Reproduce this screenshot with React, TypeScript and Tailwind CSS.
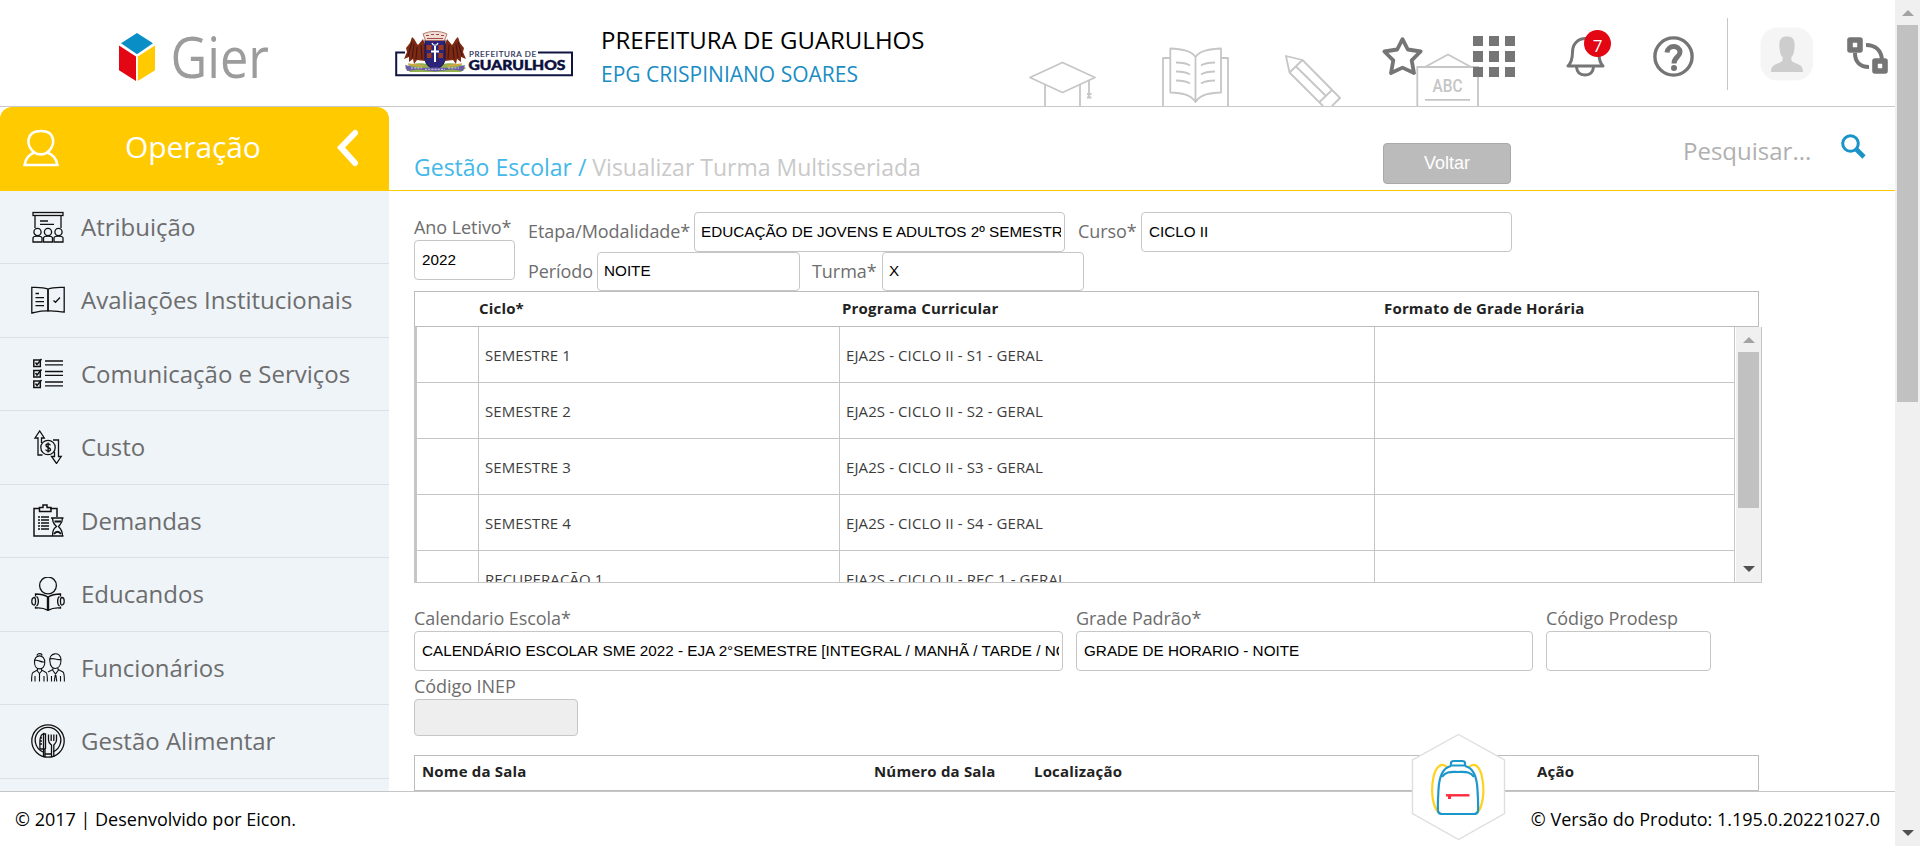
import React from "react";

const OS = "font-['Open_Sans','Noto_Sans',sans-serif]";
const ARIAL = "font-['Liberation_Sans',Arial,sans-serif]";

/* ---------- brand marks ---------- */

function GierLogo() {
  return (
    <svg className="block shrink-0 overflow-visible" width="152" height="54" viewBox="0 0 152 54">
      <path d="M18 1 L34 11.2 L18 22.3 L2 11.2 Z" fill="#0a8ec6" />
      <path d="M0 13.6 L17 24.4 V49 L0 38.2 Z" fill="#e30613" />
      <path d="M36 13.6 L18.8 24.4 V49 L36 38.2 Z" fill="#ffca00" />
      <text x="51.5" y="46" fontFamily="Open Sans" fontWeight="400" fontSize="57" fill="#9c9c9c" textLength="98.5" lengthAdjust="spacingAndGlyphs">
        Gier
      </text>
    </svg>
  );
}

function CityLogo() {
  return (
    <svg className="block shrink-0" width="180" height="48" viewBox="0 0 180 48">
      <path d="M10 21.5 H1.2 V44.3 H177 V21.5 H143" fill="none" stroke="#0f1440" strokeWidth="2" />
      <path d="M10 37 C20 29 30 34 40 33 C50 34 60 29 71 37 L66 41 L15 41 Z" fill="#93b04e" />
      <g fill="#7d2a14">
        <path d="M17 6 C20 8 21 12 23 14 L28 8 L31 16 L30 30 L22 29 L19 33 L18 28 L14 31 L14 26 L9 28 L12 21 L11 17 L15 12 Z" />
        <path d="M63 6 C60 8 59 12 57 14 L52 8 L49 16 L50 30 L58 29 L61 33 L62 28 L66 31 L66 26 L71 28 L68 21 L69 17 L65 12 Z" />
      </g>
      <g stroke="#471510" strokeWidth="1.1" fill="none">
        <path d="M17 11 L13 25 M19 13 L17 27 M22 16 L21 28 M26 14 L27 28" />
        <path d="M63 11 L67 25 M61 13 L63 27 M58 16 L59 28 M54 14 L53 28" />
      </g>
      <path d="M13 33 L28 35 M67 33 L52 35" stroke="#d9a441" strokeWidth="1.6" />
      <path d="M30 9 H50 V27 C50 34 45 37 40 38.5 C35 37 30 34 30 27 Z" fill="#2c2478" stroke="#15124a" strokeWidth="1" />
      <g fill="#9a3b1f">
        <rect x="31.5" y="14" width="5" height="5" />
        <rect x="43.5" y="14" width="5" height="5" />
        <rect x="32" y="22" width="4.5" height="5" />
        <rect x="43.5" y="22" width="4.5" height="5" />
      </g>
      <path d="M40 15 V31 M36 20.5 H44" stroke="#fff" strokeWidth="2" />
      <path d="M37 12 C38 15 42 15 43 12" stroke="#fff" strokeWidth="1.2" fill="none" />
      <path d="M28 3 C35 -0.5 45 -0.5 52 3 L49.5 9.5 H30.5 Z" fill="#f0dcd5" stroke="#ad6a5c" strokeWidth="0.9" />
      <path d="M31 4.5 H34 M36 3.5 H39 M41 3.5 H44 M46 4.5 H49 M32 7.5 H48" stroke="#a04c40" strokeWidth="1.2" />
      <path d="M10 34 L22 37 L40 36.5 L58 37 L70 34 L68 40 L57 38.5 L40 40.5 L23 38.5 L12 40 Z" fill="#6a5ca6" />
      <path d="M16 37 H27 M30 38.3 H50 M53 37 H64" stroke="#d5cde9" strokeWidth="1" strokeDasharray="2 1.2" />
      <text x="74" y="26.3" fontFamily="Lato" fontWeight="400" fontSize="8" fill="#2b2f57" stroke="#2b2f57" strokeWidth="0.2" textLength="67">PREFEITURA DE</text>
      <text x="73.5" y="38.6" fontFamily="Lato" fontWeight="900" fontSize="14" fill="#0b0f3c" stroke="#0b0f3c" strokeWidth="0.5" textLength="97" lengthAdjust="spacingAndGlyphs">GUARULHOS</text>
    </svg>
  );
}

function HeaderArt() {
  return (
    <svg className="pointer-events-none absolute bottom-0 left-[1020px]" width="470" height="66" viewBox="1020 40 470 66" fill="none" stroke="#c6c6c6" strokeWidth="1.8" strokeLinejoin="round">
      <path d="M1030 77.5 L1062.5 62.5 L1095 77.5 L1062.5 92.5 Z" />
      <path d="M1045 85 V106 M1080 85 V106 M1089 80 V98" />
      <path d="M1087 94 H1091.5 M1087 97.5 H1091.5" strokeWidth="2.2" />
      <path d="M1170 58 H1163 V106 M1221 58 H1228 V106" />
      <path d="M1170.3 48.5 C1180 49 1191 50 1195.5 57 C1200 50 1211 49 1221 48.5 V92.5 C1210 93 1201 94 1195.5 102 C1190 94 1181 93 1170.3 92.5 Z M1195.5 57 V101" />
      <path d="M1176 62.5 C1182 62.5 1186 63 1190 65.5 M1176 71.5 C1182 71.5 1186 72 1190 74.5 M1176 80.5 C1182 80.5 1186 81 1190 83.5 M1215 62.5 C1209 62.5 1205 63 1201 65.5 M1215 71.5 C1209 71.5 1205 72 1201 74.5 M1215 80.5 C1209 80.5 1205 81 1201 83.5" />
      <path d="M1323 106 L1289.5 72.5 L1286 56 L1302.5 60 L1340 98 L1332 106 M1289.5 72.5 L1302.5 60 M1296 66.5 L1326 96 M1319.5 102 L1332 90" />
      <path d="M1425 67 L1448 54.5 L1471 67 M1416.5 67 H1479 M1417.3 67 V106 M1478 67 V106 M1425 99.8 H1470" />
      <text x="1432.5" y="92" stroke="none" fill="#c6c6c6" fontFamily="Roboto" fontWeight="500" fontSize="17.5" textLength="30" lengthAdjust="spacingAndGlyphs">ABC</text>
    </svg>
  );
}

/* ---------- toolbar icons ---------- */

const StarIcon = () => (
  <svg className="block shrink-0" width="42" height="42" viewBox="0 0 42 42">
    <path d="M20.5 3.2 L25.8 13.5 L38.6 15.5 L29.7 24.4 L32 37 L20.5 31.6 L9 37 L11.3 24.4 L2.4 15.5 L15.2 13.5 Z" fill="none" stroke="#757575" strokeWidth="3.8" strokeLinejoin="round" />
  </svg>
);

const GridIcon = () => (
  <span className="grid shrink-0 grid-cols-3 gap-x-[5.5px] gap-y-[5px]">
    {[0, 1, 2, 3, 4, 5, 6, 7, 8].map((i) => (
      <span key={i} className="size-[10.3px] bg-[#757575]" />
    ))}
  </span>
);

const BellIcon = () => (
  <svg className="block" width="40" height="42" viewBox="0 0 40 42" fill="none" stroke="#757575" strokeWidth="3">
    <path d="M2 31 H37 C33.5 27.5 33 24 33 19 C33 9 27 3.5 19.5 3.5 C12 3.5 6.5 9 6.5 17 C6.5 24 5.5 27.5 2 31 Z" strokeLinejoin="round" />
    <path d="M10.5 32 C11 38 14.5 40 19 40 C23.5 40 27 38 27.5 32" />
  </svg>
);

const HelpIcon = () => (
  <svg className="block shrink-0" width="42" height="42" viewBox="0 0 42 42">
    <circle cx="20.5" cy="20.5" r="18.6" fill="none" stroke="#757575" strokeWidth="3.4" />
    <path d="M14 16.5 C14.5 8.7 27 8.7 27 16 C27 21 21 21 21 27.5" fill="none" stroke="#757575" strokeWidth="5" />
    <circle cx="21" cy="32" r="3" fill="#757575" />
  </svg>
);

const Avatar = () => (
  <svg className="block shrink-0" width="54" height="54" viewBox="0 0 54 54">
    <rect x="0.5" y="0.5" width="52.5" height="53" rx="17" fill="#f5f5f5" />
    <path d="M11 45 C11 38 15 38 20 35.5 C23 34 23 32.5 22.5 30 C20.5 28 20 25.5 19.5 21 C18.5 13 21 9.5 27 9.5 C33 9.5 35.5 13 34.5 21 C34 25.5 33.5 28 31.5 30 C31 32.5 31 34 34 35.5 C39 38 43 38 43 45 Z" fill="#cdcdcd" />
  </svg>
);

const SwapIcon = () => (
  <svg className="block shrink-0" width="42" height="38" viewBox="0 0 42 38" fill="none" stroke="#757575">
    <rect x="3" y="3" width="10" height="10" strokeWidth="5.6" strokeLinejoin="round" />
    <rect x="28" y="24" width="10" height="10" strokeWidth="5.6" strokeLinejoin="round" />
    <path d="M19 8 C29 8 34 14 35 22 M8 16 C8 25 13 30 22 30" strokeWidth="4" />
  </svg>
);

/* ---------- sidebar icons (34x34) ---------- */

const ic = {
  className: "block shrink-0",
  width: 34,
  height: 34,
  viewBox: "0 0 34 34",
  fill: "none",
  stroke: "#111",
  strokeWidth: 1.3,
} as const;

const ClassIcon = () => (
  <svg {...ic}>
    <rect x="2" y="2.5" width="30" height="3" />
    <path d="M4 5.5 V18 M30 5.5 V18 M9 11 H17 M9 14.3 H23" />
    {[6.5, 17, 27.5].map((x) => (
      <g key={x}>
        <circle cx={x} cy="22" r="3.6" />
        <path d={`M${x - 4.5} 32 V28 C${x - 4.5} 25.5 ${x + 4.5} 25.5 ${x + 4.5} 28 V32 Z`} />
      </g>
    ))}
  </svg>
);

const BookIcon = () => (
  <svg {...ic}>
    <path d="M16.8 6 C12 4 6 4.5 0.8 4.3 V30 C6 29 11 27.5 17 28 C23 27.5 28 29 33.2 29 V4.3 C28 4.5 22 4 17 6 Z" />
    <path d="M17 6 V28" strokeWidth="1.8" />
    <path d="M4.5 10.5 H8 M4.5 14.7 H13 M4.5 18.7 H13 M4.5 22.7 H13 M22.5 17.5 L24.5 19.3 L29 14.5" />
  </svg>
);

const ListIcon = () => (
  <svg {...ic}>
    {[3, 13.5, 24].map((y) => (
      <g key={y}>
        <rect x="2.8" y={y} width="6.5" height="6.5" strokeWidth="1.5" />
        <path d={`M4.5 ${y + 2.5} L6 ${y + 4.5} L10.5 ${y - 1}`} strokeWidth="1.5" />
        <path d={`M14 ${y + 1} H32 M14 ${y + 4.8} H32`} />
      </g>
    ))}
  </svg>
);

const CostIcon = () => (
  <svg {...ic}>
    <path d="M11.5 25 H7 V8 H4 L8.7 1 L13.3 8 H10.5 V13 M22 10 H27.5 V26.5 H30.2 L25.5 33.5 L20.5 26.5 H23.5 V22" />
    <circle cx="17" cy="17.5" r="7.2" />
    <path d="M19.3 15.3 C19 13.5 15 13.3 15 15.5 C15 18 19.5 17 19.5 19.6 C19.5 21.8 15 21.5 14.7 19.5 M17.1 12.5 V22.5" strokeWidth="1.4" />
  </svg>
);

const DemandIcon = () => (
  <svg {...ic}>
    <path d="M8 4.5 H3 V32 H32.5 M19 4.5 H26 V13 M8.5 3.5 H12 V1 H16 V3.5 H20 V7.5 H8.5 Z" strokeWidth="1.5" />
    <path d="M7 13 H9 M7 16 H9 M7 19 H9 M7 22 H9 M7 25 H9 M10 13 H18 M10 16 H18 M10 19 H18 M10 22 H18 M10 25 H18" strokeWidth="1.5" />
    <path d="M20 14 H32.5 M21.5 14 C21.5 20 24 20.5 25.5 22.5 C23 24.5 21.5 26 21.5 32 M31.5 14 C31.5 20 28.5 20.5 27.5 22.5 C29.5 24.5 31.5 26 31.5 32" />
    <path d="M23.5 17.5 H30 M23 30 C25 27 28 27 30 30" strokeWidth="1.8" />
  </svg>
);

const StudentIcon = () => (
  <svg {...ic}>
    <circle cx="17" cy="8.5" r="8.4" />
    <path d="M17 20 C13 17.5 9 17 4.5 17 V19.5 M17 20 C21 17.5 25 17 29.5 17 V19.5 M4.5 29.5 V31 C9 30.5 13 31 17 33.4 C21 31 25 30.5 29.5 31 V29.5" />
    <path d="M17 20 V33" strokeWidth="2.4" />
    <path d="M3.2 20.5 C0 20.5 0 28 3.2 28 C5 28 5 20.5 3.2 20.5 Z M5.5 19.5 C8 21 8 27.5 5.5 29 M30.8 20.5 C34 20.5 34 28 30.8 28 C29 28 29 20.5 30.8 20.5 Z M28.5 19.5 C26 21 26 27.5 28.5 29" />
  </svg>
);

const StaffIcon = () => (
  <svg {...ic} strokeWidth={1.1}>
    <path d="M6 4.5 C6 2 11 2 11 4.5 M3.5 12 C2.5 2.5 14.5 2.5 13.8 12 M3.5 11.5 C3.5 20 13.8 20 13.8 11.5 M3.5 9.5 C7 8 11 12.5 14 10.5" />
    <path d="M6.5 17 V19 L2 21.5 C0.8 22 0.6 24 0.6 30.5 M10.5 17 V19 L15 21.5 C16.3 22 16.4 24 16.4 30.5 M8.5 22 V30.5 M6 19.5 L8.5 22.5 L11 19.5 M4 25 V30.5 M13 25 V30.5" />
    <path d="M19 11 C16.5 1 30.5 0 30 9 C30 20 19 20 19 10.5 M19 8 C23 6.5 25 9.5 30 8.5" />
    <path d="M22 17 V18.5 L17 21 M27 17 V18.5 L32 21 C33.3 22 33.4 24 33.4 30.5 M21.5 19 L24.5 23 L27.5 19 M24.5 22 L23.3 30.5 M24.5 22 L25.8 30.5 M20.5 25 V30.5 M29.5 25 V30.5" />
  </svg>
);

const MealIcon = () => (
  <svg {...ic}>
    <circle cx="17" cy="17" r="16.2" />
    <path d="M12 28 A12.8 12.8 0 1 1 22 28" />
    <path d="M12.5 33 V9.5 C9 11 8.5 15 9 25 H14 V33 M14.5 25 V10 H12.5 M9 14 H11 M9 17 H11 M9 20 H11" />
    <path d="M17.5 10.5 V16 C17.5 19 19.5 20 20.5 21 V33 M25.5 10.5 V16 C25.5 19 23.5 20 22.8 21 V33 M20.2 10.5 V17 M22.8 10.5 V17 M14 30 H20" />
  </svg>
);

const MENU: { label: string; Icon: () => React.ReactElement }[] = [
  { label: "Atribuição", Icon: ClassIcon },
  { label: "Avaliações Institucionais", Icon: BookIcon },
  { label: "Comunicação e Serviços", Icon: ListIcon },
  { label: "Custo", Icon: CostIcon },
  { label: "Demandas", Icon: DemandIcon },
  { label: "Educandos", Icon: StudentIcon },
  { label: "Funcionários", Icon: StaffIcon },
  { label: "Gestão Alimentar", Icon: MealIcon },
];

function Sidebar() {
  return (
    <aside className="flex w-[389px] shrink-0 flex-col overflow-hidden bg-white">
      <div className="flex h-[84px] shrink-0 items-center rounded-t-[12px] bg-[#ffca00] pb-[2px] pl-[23px] text-white">
        <svg className="block shrink-0" width="36" height="38" viewBox="0 0 36 38" fill="none" stroke="#fff" strokeWidth="2.6">
          <path d="M11.5 23.5 C2.5 17 2.5 2 18 2 C33 2 33 17 24 23.5 C21 26 14.5 26 11.5 23.5 C6 25.5 2.5 29 1.6 36 H34.4 C33.5 29 30 25.5 24 23.5" />
        </svg>
        <span className="w-[238px] pb-[3px] pl-[66px] text-[30px] tracking-[-0.1px]">Operação</span>
        <svg className="ml-[38px] block shrink-0" width="24" height="38" viewBox="0 0 24 38" fill="none" stroke="#fff" strokeWidth="6" strokeLinecap="round">
          <path d="M20 4 L6 18.5 L20 34" />
        </svg>
      </div>
      <nav className="flex flex-1 flex-col overflow-hidden bg-[#eff4f9]">
        {MENU.map(({ label, Icon }) => (
          <a key={label} className="flex h-[73.5px] shrink-0 items-center gap-[16px] border-b border-[#d9e1e8] pl-[31px] first:h-[73px]">
            <Icon />
            <span className="text-[24px] whitespace-nowrap text-[#6d6d6d]">{label}</span>
          </a>
        ))}
      </nav>
    </aside>
  );
}

function Header() {
  return (
    <header className={`${OS} relative flex h-[107px] shrink-0 border-b border-[#c8c8c8] bg-white`}>
      <HeaderArt />
      <div className="flex w-[601px] shrink-0 pl-[119px]">
        <div className="w-[276px] pt-[32px]">
          <GierLogo />
        </div>
        <div className="pt-[31px]">
          <CityLogo />
        </div>
      </div>
      <div className="flex w-[781px] shrink-0 flex-col pt-[24px] whitespace-nowrap">
        <span className="text-[24px] leading-[32px] text-black">PREFEITURA DE GUARULHOS</span>
        <span className="text-[21px] leading-[36px] text-[#1a8dc4]">EPG CRISPINIANO SOARES</span>
      </div>
      <div className="relative flex flex-1">
        <div className="w-[91px] pt-[36px]"><StarIcon /></div>
        <div className="flex w-[93px] items-start pt-[36px]"><GridIcon /></div>
        <div className="relative w-[87px] pt-[35px]">
          <BellIcon />
          <span className="absolute top-[30px] left-[18px] flex size-[27px] items-center justify-center rounded-full bg-[#e30613] pt-[3px] text-[17px] leading-none text-white">7</span>
        </div>
        <div className="w-[74px] pt-[36px]"><HelpIcon /></div>
        <div className="w-[33px] pt-[18px]"><div className="h-[72px] w-px bg-[#c6c6c6]" /></div>
        <div className="w-[87px] pt-[27px]"><Avatar /></div>
        <div className="pt-[37px]"><SwapIcon /></div>
      </div>
    </header>
  );
}

function Box({ className, children }: { className: string; children?: React.ReactNode }) {
  return (
    <div className={`${ARIAL} flex shrink-0 items-center rounded-[4px] border border-[#c6c6c6] px-[7px] text-[15.25px] text-black ${className}`}>
      <span className="w-full overflow-hidden whitespace-nowrap">{children}</span>
    </div>
  );
}

const LABEL = "shrink-0 whitespace-nowrap text-[18px] tracking-[-0.06px] text-[#6d6d6d]";

const ROWS = [
  ["SEMESTRE 1", "EJA2S - CICLO II - S1 - GERAL"],
  ["SEMESTRE 2", "EJA2S - CICLO II - S2 - GERAL"],
  ["SEMESTRE 3", "EJA2S - CICLO II - S3 - GERAL"],
  ["SEMESTRE 4", "EJA2S - CICLO II - S4 - GERAL"],
  ["RECUPERAÇÃO 1", "EJA2S - CICLO II - REC 1 - GERAL"],
];

function Arrow({ down, color }: { down?: boolean; color: string }) {
  return (
    <svg className="block" width="12" height="6" viewBox="0 0 12 6">
      <path d={down ? "M0 0 H12 L6 6 Z" : "M0 6 H12 L6 0 Z"} fill={color} />
    </svg>
  );
}

function CycleTable() {
  return (
    <>
      <div className="flex h-[36px] w-[1345px] shrink-0 items-center border border-[#bdbdbd] pb-[2px] text-[15px] font-bold tracking-[0.18px] text-[#222]">
        <span className="w-[427px] pl-[64px]">Ciclo*</span>
        <span className="w-[542px]">Programa Curricular</span>
        <span>Formato de Grade Horária</span>
      </div>
      <div className="flex h-[256px] w-[1348px] shrink-0 overflow-hidden border-r border-b border-l-[3px] border-[#c6c6c6]">
        <div className="flex w-[1318px] shrink-0 flex-col overflow-hidden border-r border-[#c6c6c6]">
          {ROWS.map(([a, b]) => (
            <div key={a} className="grid h-[56px] shrink-0 grid-cols-[62px_361px_535px_359px] border-b border-[#c6c6c6] text-[15px] tracking-[0.1px] text-[#3c3c3c]">
              <span className="border-r border-[#c6c6c6]" />
              <span className="flex items-center border-r border-[#c6c6c6] pt-[2px] pl-[6px]">{a}</span>
              <span className="flex items-center border-r border-[#c6c6c6] pt-[2px] pl-[6px]">{b}</span>
            </div>
          ))}
        </div>
        <div className="ml-[1px] flex flex-1 flex-col items-center bg-[#f0f0f0] pt-[10px]">
          <Arrow color="#a3a3a3" />
          <div className="mt-[9px] h-[156px] w-[21px] bg-[#c1c1c1]" />
          <div className="mt-[58px]"><Arrow down color="#505050" /></div>
        </div>
      </div>
    </>
  );
}

function Main() {
  return (
    <main className="flex flex-1 flex-col overflow-hidden bg-white">
      <div className="flex h-[84px] shrink-0 border-b border-[#ffca00] pl-[25px] whitespace-nowrap">
        <div className="w-[969px] pt-[42px] text-[23px] leading-[36px]">
          <span className="text-[#44b8e8]">Gestão Escolar / </span>
          <span className="text-[#c9c9c9]">Visualizar Turma Multisseriada</span>
        </div>
        <div className="w-[300px] pt-[36px]">
          <button className={`${ARIAL} block h-[41px] w-[128px] rounded-[4px] border border-[#a9a9a9] bg-[#bbb] text-[18px] text-white`}>Voltar</button>
        </div>
        <div className="w-[158px] pt-[26px] text-[24px] leading-[36px] text-[#b0b0b0]">Pesquisar...</div>
        <div className="pt-[27px]">
          <svg className="block" width="26" height="26" viewBox="0 0 26 26" fill="none" stroke="#1a93c9">
            <circle cx="9.5" cy="9.5" r="7.8" strokeWidth="3" />
            <path d="M15.5 15.5 L23 23" strokeWidth="4.6" />
          </svg>
        </div>
      </div>

      <div className="flex flex-1 flex-col overflow-hidden pt-[21px] pl-[25px]">
        <div className="flex h-[79px] shrink-0">
          <div className="w-[114px]">
            <div className={`${LABEL} h-[28px] pt-[1px] leading-[28px]`}>Ano Letivo*</div>
            <Box className="h-[40px] w-[101px]">2022</Box>
          </div>
          <div>
            <div className="flex h-[40px] items-center">
              <span className={`${LABEL} w-[166px] pb-[2px]`}>Etapa/Modalidade*</span>
              <Box className="mr-[13px] h-[40px] w-[371px] pr-[3px] pl-[6px]">EDUCAÇÃO DE JOVENS E ADULTOS 2º SEMESTRE</Box>
              <span className={`${LABEL} w-[63px] pb-[2px]`}>Curso*</span>
              <Box className="h-[40px] w-[371px]">CICLO II</Box>
            </div>
            <div className="flex h-[39px] items-center">
              <span className={`${LABEL} w-[69px]`}>Período</span>
              <Box className="mr-[12px] h-[39px] w-[203px] pl-[6px]">NOITE</Box>
              <span className={`${LABEL} w-[70px]`}>Turma*</span>
              <Box className="h-[39px] w-[202px] pl-[6px]">X</Box>
            </div>
          </div>
        </div>

        <CycleTable />

        <div className="flex h-[88px] shrink-0 gap-[13px] pt-[22px]">
          <div>
            <div className={`${LABEL} h-[26px] leading-[27px]`}>Calendario Escola*</div>
            <Box className="h-[40px] w-[649px] pr-[3px]">CALENDÁRIO ESCOLAR SME 2022 - EJA 2°SEMESTRE [INTEGRAL / MANHÃ / TARDE / NOITE]</Box>
          </div>
          <div>
            <div className={`${LABEL} h-[26px] leading-[27px]`}>Grade Padrão*</div>
            <Box className="h-[40px] w-[457px]">GRADE DE HORARIO - NOITE</Box>
          </div>
          <div>
            <div className={`${LABEL} h-[26px] leading-[27px]`}>Código Prodesp</div>
            <Box className="h-[40px] w-[165px]" />
          </div>
        </div>
        <div className="h-[84px] shrink-0">
          <div className={`${LABEL} h-[28px] leading-[30px]`}>Código INEP</div>
          <Box className="h-[37px] w-[164px] bg-[#eee]" />
        </div>

        <div className="flex h-[38px] w-[1345px] shrink-0 border border-b-[3px] border-[#bdbdbd] pt-[5px] pl-[7px] text-[15px] leading-[21px] font-bold tracking-[0.18px] text-[#222]">
          <span className="w-[452px]">Nome da Sala</span>
          <span className="w-[160px]">Número da Sala</span>
          <span className="w-[503px]">Localização</span>
          <span>Ação</span>
        </div>
      </div>
    </main>
  );
}

function BackpackBadge() {
  return (
    <svg className="absolute top-[733px] left-[1411px] block" width="96" height="108" viewBox="0 0 96 108">
      <path d="M47.5 1.5 L93.5 27 V80.5 L47.5 106.5 L1.5 80.5 V27 Z" fill="#fff" stroke="#dedede" strokeWidth="1.4" />
      <g fill="none" strokeWidth="2.2">
        <path d="M36 34 C31 29 25 33 22.5 44 C19.5 58 21.5 74 28 80 M58 34 C63 29 69 33 71 44 C74 58 72 74 66 80" stroke="#ffd21f" />
        <path d="M40 33 V30 C40 28.5 41 28 43 28 H51 C53 28 54 28.5 54 30 V33 M40 32.5 H54" stroke="#1b97cc" />
        <path d="M40 33 C31 35 28 45 27.5 57 C27 66 26.5 74 27 78 C27.5 80.5 29 81 31 81 H63 C65 81 66.5 80.5 67 78 C67.5 74 67 66 66.5 57 C66 45 63 35 54 33 M31 44 C35 38 40 39 47 39 C54 39 59 38 63 44" stroke="#1b97cc" />
        <path d="M35 62.3 H58.5" stroke="#ff2a3a" strokeWidth="2.4" />
        <path d="M38.5 62 V66" stroke="#ff2a3a" strokeWidth="3" />
      </g>
    </svg>
  );
}

export default function App() {
  return (
    <div className={`${OS} relative flex h-[846px] w-[1920px] overflow-hidden bg-white leading-normal`}>
      <div className="flex w-[1895px] shrink-0 flex-col">
        <Header />
        <div className="flex h-[684px] shrink-0">
          <Sidebar />
          <Main />
        </div>
        <footer className="flex h-[55px] shrink-0 items-center justify-between border-t border-[#c6c6c6] bg-white pr-[15px] pl-[15px] text-[18px] text-black">
          <span>© 2017 | Desenvolvido por Eicon.</span>
          <span>© Versão do Produto: 1.195.0.20221027.0</span>
        </footer>
      </div>
      <div className="flex flex-1 flex-col items-center bg-[#f0f0f0] pt-[10px]">
        <Arrow color="#a3a3a3" />
        <div className="mt-[9px] h-[377px] w-[21px] bg-[#c1c1c1]" />
        <div className="mt-[428px]"><Arrow down color="#505050" /></div>
      </div>
      <BackpackBadge />
    </div>
  );
}
